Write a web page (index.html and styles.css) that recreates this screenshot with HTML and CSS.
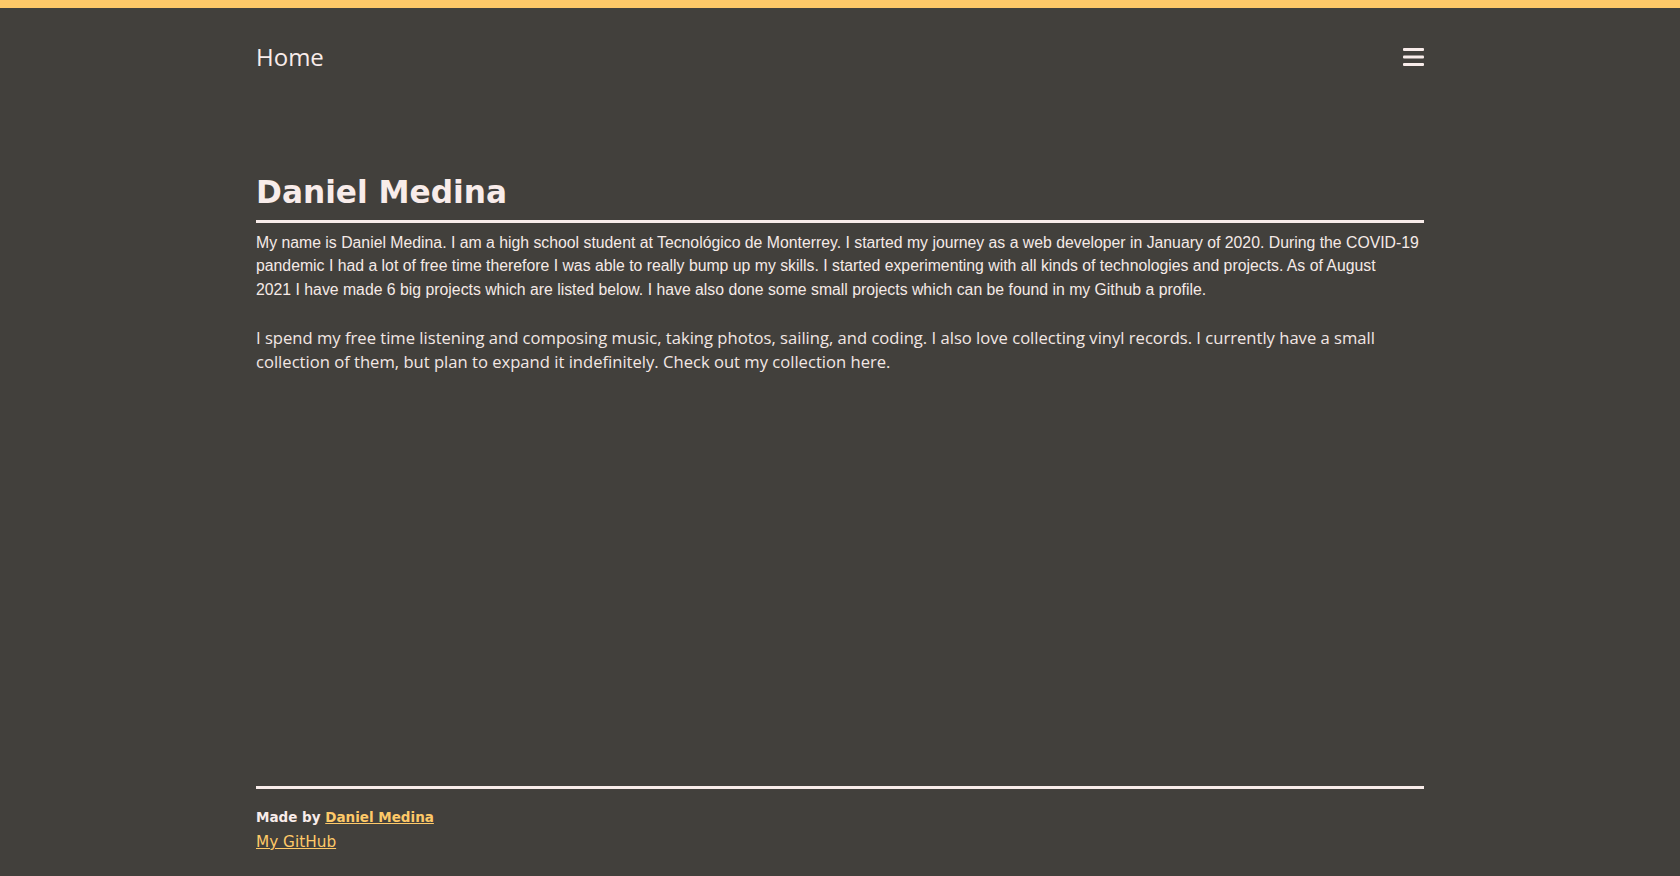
FILE: index.html
```html
<!DOCTYPE html>
<html lang="en">
<head>
<meta charset="utf-8">
<title>Daniel Medina</title>
<link rel="stylesheet" href="styles.css">
</head>
<body>
  <div class="page">
    <nav class="nav">
      <a class="nav-home" href="#">Home</a>
      <button class="nav-menu" aria-label="Menu">
        <svg width="21" height="18" viewBox="0 0 21 18">
          <rect x="0" y="0" width="21" height="3" rx="1" fill="#f8ecea"/>
          <rect x="0" y="7.5" width="21" height="3" rx="1" fill="#f8ecea"/>
          <rect x="0" y="15" width="21" height="3" rx="1" fill="#f8ecea"/>
        </svg>
      </button>
    </nav>
    <main class="main">
      <h1 class="title">Daniel Medina</h1>
      <p class="intro">My name is Daniel Medina. I am a high school student at Tecnológico de Monterrey. I started my journey as a web developer in January of 2020. During the COVID-19 pandemic I had a lot of free time therefore I was able to really bump up my skills. I started experimenting with all kinds of technologies and projects. As of August<br>2021 I have made 6 big projects which are listed below. I have also done some small projects which can be found in my Github a profile.</p>
      <p class="hobbies">I spend my free time listening and composing music, taking photos, sailing, and coding. I also love collecting vinyl records. I currently have a small collection of them, but plan to expand it indefinitely. Check out my collection here.</p>
    </main>
    <footer class="footer">
      <div class="made-by">Made by <a class="footer-link-strong" href="#">Daniel Medina</a></div>
      <div class="github"><a class="footer-link" href="#">My GitHub</a></div>
    </footer>
  </div>
</body>
</html>
```

FILE: styles.css
```css
* { box-sizing: border-box; }

html, body {
  margin: 0;
  padding: 0;
}

body {
  background: #42403c;
  color: #f8ecea;
  border-top: 8px solid #fec968;
  min-height: 100vh;
  font-family: "Liberation Sans", Arial, sans-serif;
}

.page {
  width: 1168px;
  margin: 0 auto;
  min-height: calc(100vh - 8px);
  display: flex;
  flex-direction: column;
}

.nav {
  display: flex;
  justify-content: space-between;
  align-items: flex-start;
  padding-top: 35px;
}

.nav-home {
  font-family: "Open Sans", sans-serif;
  font-size: 24px;
  line-height: 28px;
  color: #f8ecea;
  text-decoration: none;
}

.nav-menu {
  background: none;
  border: 0;
  padding: 0;
  margin-top: 5px;
  display: block;
  cursor: pointer;
}

.nav-menu svg { display: block; }

.main {
  flex: 1;
}

.title {
  font-family: "DejaVu Sans", sans-serif;
  font-weight: bold;
  font-size: 31.2px;
  line-height: 37px;
  margin: 103px 0 0;
  padding-bottom: 9px;
  border-bottom: 3px solid #f8ecea;
  color: #f8ecea;
}

.intro {
  font-family: "Liberation Sans", Arial, sans-serif;
  font-size: 15.8px;
  line-height: 23.4px;
  margin: 8px 0 0;
  color: #f5eae7;
}

.hobbies {
  font-family: "Open Sans", sans-serif;
  font-size: 16.6px;
  line-height: 24px;
  margin: 25px 0 0;
  color: #f2e7e4;
}

.footer {
  border-top: 3px solid #f8ecea;
  padding: 17px 0 23px;
}

.made-by {
  font-family: "DejaVu Sans", sans-serif;
  font-weight: bold;
  font-size: 13.5px;
  line-height: 22px;
  color: #f8ecea;
}

.footer-link-strong {
  color: #fec968;
  text-decoration: underline;
}

.github {
  margin-top: 3px;
}

.footer-link {
  font-family: "DejaVu Sans", sans-serif;
  font-size: 15.3px;
  line-height: 22px;
  color: #fec968;
  text-decoration: underline;
}
```
